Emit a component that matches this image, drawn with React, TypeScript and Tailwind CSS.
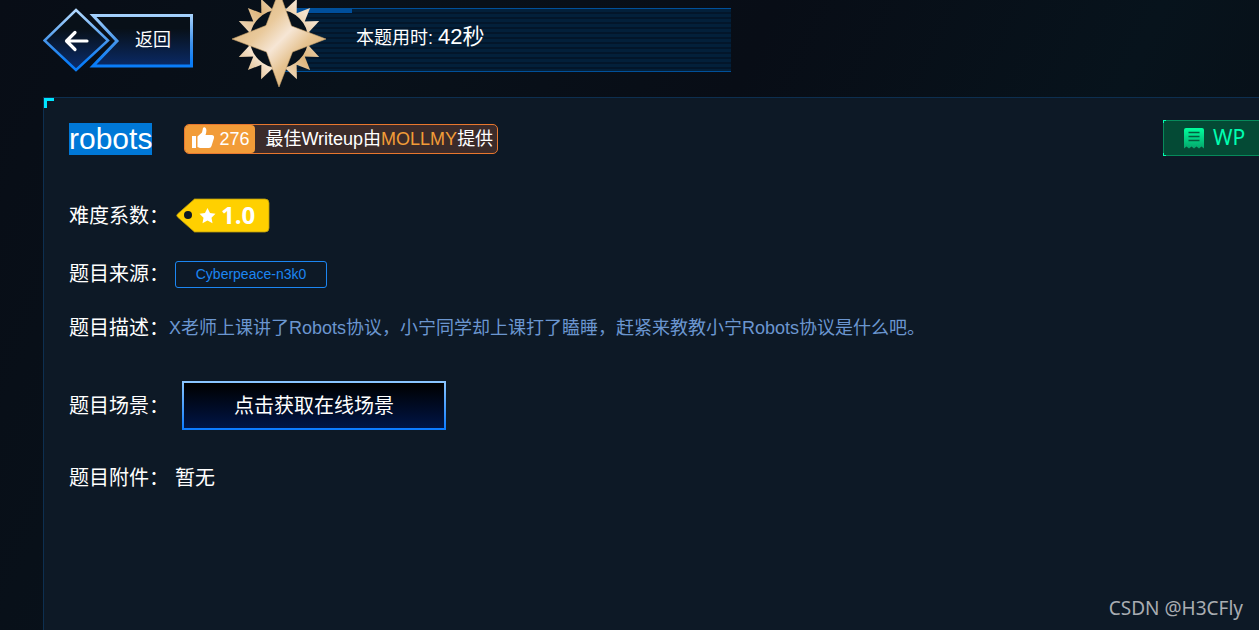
import React from "react";

const TEETH = [24, 45, 66, 114, 135, 156, 204, 225, 246, 294, 315, 336];

function tooth(angle: number): string {
  const at = (r: number, deg: number) => {
    const t = (deg * Math.PI) / 180;
    return `${(47 + r * Math.cos(t)).toFixed(1)},${(43 + r * Math.sin(t)).toFixed(1)}`;
  };
  return `${at(30, angle - 12)} ${at(44, angle)} ${at(30, angle + 12)}`;
}

function Medal() {
  return (
    <svg viewBox="0 0 94 92" className="h-[92px] w-[94px]" aria-hidden="true">
      <defs>
        <linearGradient id="gold" x1="0" y1="0" x2="94" y2="92" gradientUnits="userSpaceOnUse">
          <stop offset="0.1" stopColor="#d9b27c" />
          <stop offset="0.35" stopColor="#e9c99b" />
          <stop offset="0.5" stopColor="#f6e6d5" />
          <stop offset="0.65" stopColor="#e6c391" />
          <stop offset="0.9" stopColor="#d3a769" />
        </linearGradient>
        <linearGradient id="teeth" x1="0" y1="92" x2="94" y2="0" gradientUnits="userSpaceOnUse">
          <stop offset="0.1" stopColor="#d6ab70" />
          <stop offset="0.3" stopColor="#f5e3cd" />
          <stop offset="0.55" stopColor="#deb67d" />
          <stop offset="0.8" stopColor="#f5e3cd" />
          <stop offset="1" stopColor="#d6ab70" />
        </linearGradient>
      </defs>
      {TEETH.map((a) => (
        <polygon key={a} points={tooth(a)} fill="url(#teeth)" />
      ))}
      <circle cx="47" cy="43" r="30" fill="#07111b" stroke="url(#teeth)" strokeWidth="2" />
      <path
        d="M47 -5 L59.500 30 L94 43 L60.500 56 L47 91 L34.500 56 L0 43 L34 29.500Z"
        fill="url(#gold)"
        stroke="#c9a26b"
        strokeWidth="0.6"
      />
    </svg>
  );
}

function BackLink() {
  return (
    <a href="#back" className="relative flex h-[64px] w-[152px] shrink-0 items-center text-[18px] text-white">
      <svg viewBox="0 0 152 64" className="absolute inset-0 h-full w-full" aria-hidden="true">
        <defs>
          <linearGradient id="edge" x1="0" y1="0" x2="0" y2="64" gradientUnits="userSpaceOnUse">
            <stop offset="0" stopColor="#b8dcff" />
            <stop offset="0.15" stopColor="#9dccfb" />
            <stop offset="0.55" stopColor="#3f92ec" />
            <stop offset="0.85" stopColor="#0a7df8" />
          </linearGradient>
          <linearGradient id="inside" x1="0" y1="8" x2="0" y2="58" gradientUnits="userSpaceOnUse">
            <stop offset="0.25" stopColor="#081018" />
            <stop offset="1" stopColor="#0a2a66" />
          </linearGradient>
        </defs>
        <path d="M50 7.500H148.500V58H50L74 33Z" fill="url(#inside)" stroke="url(#edge)" strokeWidth="3" />
        <path d="M33 2L65 32.500L33 62L1.500 32.500Z" fill="url(#inside)" stroke="url(#edge)" strokeWidth="2.500" />
        <path
          d="M44 33H24M32 24.500L23.500 33L32 41.500"
          fill="none"
          stroke="#fff"
          strokeWidth="3.200"
          strokeLinecap="round"
          strokeLinejoin="round"
        />
      </svg>
      <span className="relative pl-[92px]">返回</span>
    </a>
  );
}

function Timer() {
  return (
    <div className="relative ml-[81px] h-[64px] w-[455px] border-y border-[#00509a] bg-[repeating-linear-gradient(#03203a_0px_3px,#03162a_3px_5px)]">
      <div className="h-[4px] w-[76px] bg-[#004f9c]" />
      <div className="absolute -top-[13px] -left-[44px]">
        <Medal />
      </div>
      <p className="pt-[10px] pl-[80px] text-[18px] leading-[28px] text-white">
        本题用时: <span className="text-[22px]">42秒</span>
      </p>
    </div>
  );
}

function Label({ children }: { children: React.ReactNode }) {
  return <dt className="w-[100px] shrink-0 whitespace-nowrap">{children}</dt>;
}

function DifficultyTag() {
  return (
    <div className="relative ml-[7px] flex h-[35px] w-[94px] items-center">
      <svg viewBox="0 0 94 35" className="absolute inset-0 h-full w-full" aria-hidden="true">
        <path
          d="M18.500 1H89Q93 1 93 5V30Q93 34 89 34H18.500L1.500 19Q0 17.500 1.500 16Z"
          fill="#ffd000"
          stroke="#b99a0c"
          strokeWidth="0.8"
        />
        <circle cx="12" cy="17" r="4" fill="#0d1926" />
        <path
          d="M31.500 10l2.500 5 5.500.8-4 3.900 1 5.500-5-2.600-5 2.600 1-5.500-4-3.900 5.500-.8z"
          fill="#fff"
        />
      </svg>
      <span className="relative pb-[2px] pl-[45px] font-['Open_Sans',sans-serif] text-[24px] font-bold leading-none">1.0</span>
    </div>
  );
}

export default function App() {
  return (
    <div className="flex min-h-screen flex-col overflow-hidden bg-[linear-gradient(115deg,#080d16_0%,#08111a_25%,#080d16_50%,#07131c_75%,#080d14_100%)] pl-[43px] font-['Liberation_Sans','Noto_Sans_CJK_SC',sans-serif] text-white">
      <header className="flex items-start pt-2 pb-[25px]">
        <BackLink />
        <Timer />
      </header>

      <main className="relative flex flex-1 flex-col border-t border-l border-[#0d2f50] bg-[#0d1926] pt-[22px] pl-[25px]">
        <span className="absolute top-0 left-0 h-[10px] w-[10px] border-t-3 border-l-3 border-[#00e5ff]" />

        <div className="flex items-start justify-between">
          <div className="flex items-center pt-[3px]">
            <h1 className="bg-[#0078d7] text-[30px] leading-[32px]">robots</h1>
            <div className="ml-8 flex h-[30px] items-center rounded-[5px] border border-[#e8772e] bg-[#3b2b2a] text-[18px]">
              <span className="flex h-[28px] w-[70px] items-center rounded-[4px] bg-[#f29c38] pl-[7px]">
                <svg viewBox="0 0 22 22" className="mr-[5px] mb-[3px] h-[22px] w-[22px]" fill="#fff" aria-hidden="true">
                  <path d="M0 9h4v12H0zM5.500 9.500L10 5.500 11 1Q12.500-.5 14 1.500 15 3.500 13.500 8H20Q22.500 8.500 22 11L19.500 19Q19 21 17 21H8L5.500 20z" />
                </svg>
                276
              </span>
              <span className="pr-1 pl-[10px] whitespace-nowrap">
                最佳Writeup由<span className="text-[#f29c38]">MOLLMY</span>提供
              </span>
            </div>
          </div>
          <button
            type="button"
            className="relative flex h-[36px] w-[96px] items-center border border-r-0 border-[#078a5b] bg-[#044a35] pl-5 font-['Noto_Sans',sans-serif] text-[21px] text-[#00ffb0]"
          >
            <span className="absolute -top-px -left-px h-[3px] w-[3px] border-t border-l border-[#00ffb0]" />
            <span className="absolute -bottom-px -left-px h-[3px] w-[3px] border-b border-l border-[#00ffb0]" />
            <svg viewBox="0 0 20 22" className="mr-[9px] h-[22px] w-[20px]" aria-hidden="true">
              <defs>
                <linearGradient id="note" x1="0" y1="0" x2="0" y2="1">
                  <stop offset="0" stopColor="#00ff9d" />
                  <stop offset="1" stopColor="#05a56b" />
                </linearGradient>
              </defs>
              <path
                d="M2 1H18Q20 1 20 3V21.500L17.500 19.500 15 21.500 12.500 19.500 10 21.500 7.500 19.500 5 21.500 2.500 19.500 0 21.500V3Q0 1 2 1Z"
                fill="url(#note)"
              />
              <path d="M4.500 5.500H15.500M4.500 9.500H15.500M4.500 13.500H15.500" stroke="#045c3e" strokeWidth="1.300" />
            </svg>
            WP
          </button>
        </div>

        <dl className="flex flex-col pt-[42px] text-[20px] leading-[30px]">
          <div className="flex h-[35px] items-center">
            <Label>难度系数：</Label>
            <dd>
              <DifficultyTag />
            </dd>
          </div>
          <div className="mt-[26px] flex h-[30px] items-center">
            <Label>题目来源：</Label>
            <dd className="ml-[6px] flex h-[27px] w-[152px] items-center justify-center rounded-[3px] border border-[#1c86f2] text-[14px] text-[#1c86f2]">
              Cyberpeace-n3k0
            </dd>
          </div>
          <div className="mt-6 flex min-h-[30px] items-center">
            <Label>题目描述：</Label>
            <dd className="text-[18px] text-[#6b96d0]">
              X老师上课讲了Robots协议，小宁同学却上课打了瞌睡，赶紧来教教小宁Robots协议是什么吧。
            </dd>
          </div>
          <div className="mt-[38px] flex h-[49px] items-center">
            <Label>题目场景：</Label>
            <dd className="ml-[13px]">
              <button
                type="button"
                className="h-[49px] w-[264px] border-2 border-transparent [background:linear-gradient(#000,#001546)_padding-box,linear-gradient(#8cc6ff,#0a7aff)_border-box]"
              >
                点击获取在线场景
              </button>
            </dd>
          </div>
          <div className="mt-[33px] flex h-[30px] items-center">
            <Label>题目附件：</Label>
            <dd className="ml-[6px]">暂无</dd>
          </div>
        </dl>

        <footer className="mt-auto pr-4 pb-2 text-right font-['Noto_Sans',sans-serif] text-[19px] leading-[28px] text-[#a9adb2]">
          CSDN @H3CFly
        </footer>
      </main>
    </div>
  );
}
